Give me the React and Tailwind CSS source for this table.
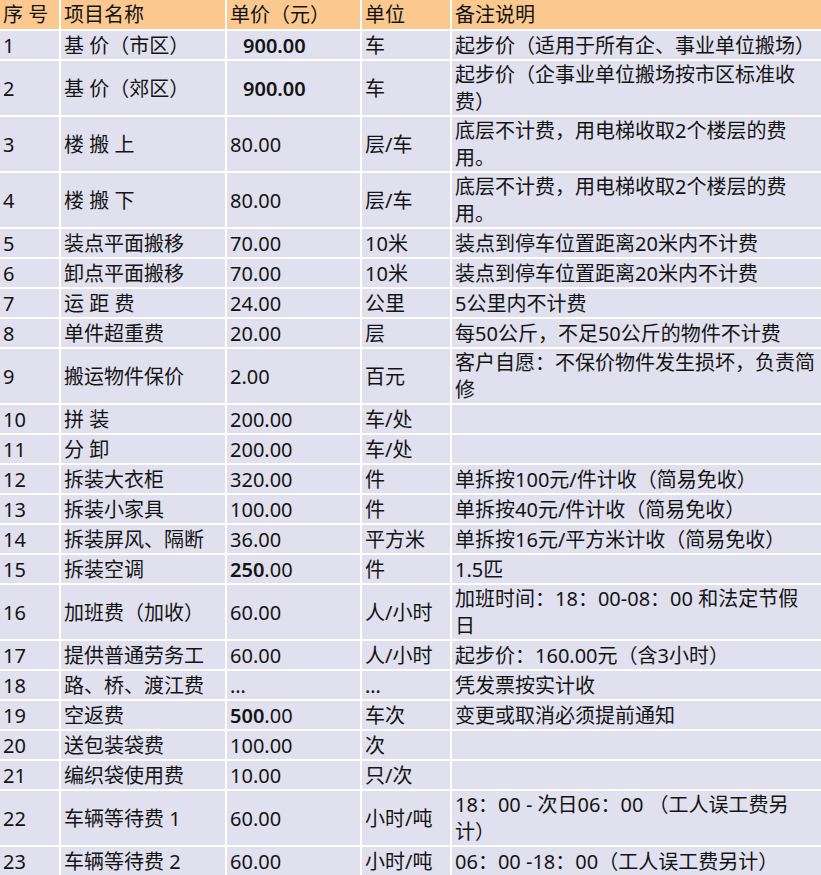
import React from 'react';

// each row: [no, name, price, unit, note lines]
const rows = [
  ['1', '基 价（市区）', { bold: '900.00', indent: true }, '车', ['起步价（适用于所有企、事业单位搬场）']],
  ['2', '基 价（郊区）', { bold: '900.00', indent: true }, '车', ['起步价（企事业单位搬场按市区标准收', '费）']],
  ['3', '楼 搬 上', '80.00', '层/车', ['底层不计费，用电梯收取2个楼层的费', '用。']],
  ['4', '楼 搬 下', '80.00', '层/车', ['底层不计费，用电梯收取2个楼层的费', '用。']],
  ['5', '装点平面搬移', '70.00', '10米', ['装点到停车位置距离20米内不计费']],
  ['6', '卸点平面搬移', '70.00', '10米', ['装点到停车位置距离20米内不计费']],
  ['7', '运 距 费', '24.00', '公里', ['5公里内不计费']],
  ['8', '单件超重费', '20.00', '层', ['每50公斤，不足50公斤的物件不计费']],
  ['9', '搬运物件保价', '2.00', '百元', ['客户自愿：不保价物件发生损坏，负责简', '修']],
  ['10', '拼 装', '200.00', '车/处', []],
  ['11', '分 卸', '200.00', '车/处', []],
  ['12', '拆装大衣柜', '320.00', '件', ['单拆按100元/件计收（简易免收）']],
  ['13', '拆装小家具', '100.00', '件', ['单拆按40元/件计收（简易免收）']],
  ['14', '拆装屏风、隔断', '36.00', '平方米', ['单拆按16元/平方米计收（简易免收）']],
  ['15', '拆装空调', { bold: '250', rest: '.00' }, '件', ['1.5匹']],
  ['16', '加班费（加收）', '60.00', '人/小时', ['加班时间：18：00-08：00 和法定节假', '日']],
  ['17', '提供普通劳务工', '60.00', '人/小时', ['起步价：160.00元（含3小时）']],
  ['18', '路、桥、渡江费', '…', '…', ['凭发票按实计收']],
  ['19', '空返费', { bold: '500', rest: '.00' }, '车次', ['变更或取消必须提前通知']],
  ['20', '送包装袋费', '100.00', '次', []],
  ['21', '编织袋使用费', '10.00', '只/次', []],
  ['22', '车辆等待费 1', '60.00', '小时/吨', ['18：00 - 次日06：00 （工人误工费另', '计）']],
  ['23', '车辆等待费 2', '60.00', '小时/吨', ['06：00 -18：00（工人误工费另计）']],
];

const Price = ({ value }) => {
  if (typeof value === 'string') return <span>{value}</span>;
  return (
    <span className={value.indent ? 'pl-[13px]' : ''}>
      <span className="font-semibold">{value.bold}</span>
      {value.rest}
    </span>
  );
};

const cell = 'flex items-center pl-[3px] bg-[#e0e0ee] whitespace-nowrap overflow-hidden';
const head = 'flex items-center pl-[3px] bg-[#fbc98f] whitespace-nowrap';

export default function App() {
  return (
    <div
      className="w-[821px] h-[875px] overflow-hidden bg-white text-[20px] leading-[27px] text-[#141414]"
      style={{ fontFamily: '"Noto Sans", "Noto Sans CJK SC", sans-serif' }}
    >
      <div className="grid grid-cols-[59px_164px_133px_88px_1fr] gap-[2px]">
        <div className={`${head} h-[29px]`}>序 号</div>
        <div className={`${head} h-[29px]`}>项目名称</div>
        <div className={`${head} h-[29px]`}>单价（元）</div>
        <div className={`${head} h-[29px]`}>单位</div>
        <div className={`${head} h-[29px]`}>备注说明</div>
        {rows.map(([no, name, price, unit, note]) => {
          const h = note.length > 1 ? 'h-[54px]' : 'h-[28px]';
          return (
            <React.Fragment key={no}>
              <div className={`${cell} ${h}`}>{no}</div>
              <div className={`${cell} ${h}`}>{name}</div>
              <div className={`${cell} ${h}`}><Price value={price} /></div>
              <div className={`${cell} ${h}`}>{unit}</div>
              <div className={`${cell} ${h}`}>
                <div className="flex flex-col">
                  {note.map((line, i) => (
                    <span key={i}>{line}</span>
                  ))}
                </div>
              </div>
            </React.Fragment>
          );
        })}
      </div>
    </div>
  );
}
